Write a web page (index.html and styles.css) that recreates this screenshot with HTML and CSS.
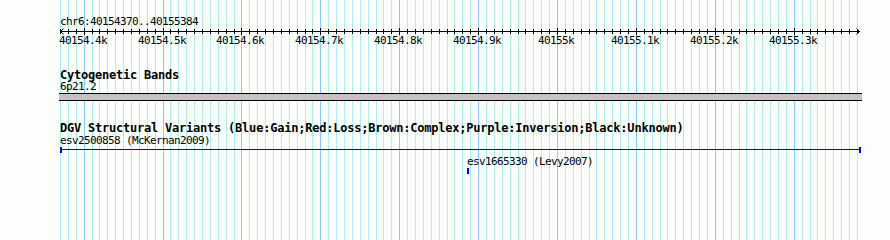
FILE: index.html
```html
<!DOCTYPE html>
<html lang="en">
<head>
    <meta charset="UTF-8">
    <title>chr6:40154370..40155384</title>
    <link rel="stylesheet" href="styles.css">
</head>
<body>
<div class="browser">
    <svg class="grid" id="grid" width="890" height="240"></svg>

    <div class="tracks">
        <div class="ruler">
            <div class="ref-label">chr6:40154370..40155384</div>
            <svg class="ruler-svg" id="ruler" width="890" height="20"></svg>
        </div>

        <div class="track cyto">
            <div class="track-title">Cytogenetic Bands</div>
            <div class="feature-label">6p21.2</div>
            <div class="band"></div>
        </div>

        <div class="track dgv">
            <div class="track-title">DGV Structural Variants (Blue:Gain;Red:Loss;Brown:Complex;Purple:Inversion;Black:Unknown)</div>
            <div class="feature-label">esv2500858 (McKernan2009)</div>
            <div class="sv" style="width: 801px"></div>
            <div class="feature-label second" style="margin-left: 407px">esv1665330 (Levy2007)</div>
            <div class="sv point" style="margin-left: 407px"></div>
        </div>
    </div>
</div>
<script src="script.js"></script>
</body>
</html>
```

FILE: styles.css
```css
body {
    margin: 0;
    background: #fbfefb;
}

.browser {
    position: relative;
    width: 890px;
    height: 240px;
    overflow: hidden;
    font-family: "DejaVu Sans Mono", monospace;
    color: #000;
}

/* grid sits under the tracks */
.grid {
    position: absolute;
    top: 0;
    left: 0;
}
.grid .minor {
    stroke: #b0eeee;
}
.grid .major {
    stroke: #87cefa;
}

.tracks {
    position: relative;
}

.ruler {
    padding-top: 16px;
}

.ref-label,
.feature-label {
    font-size: 11px;
    letter-spacing: -0.62px;
    line-height: 12px;
    white-space: nowrap;
}

.ref-label {
    padding-left: 60px;
}

.ruler-svg {
    display: block;
}
.ruler-svg line,
.ruler-svg polyline {
    stroke: #000;
    fill: none;
}
.tick-label {
    font-family: "DejaVu Sans Mono", monospace;
    font-size: 11px;
    letter-spacing: -0.62px;
    fill: #000;
}

.track {
    padding-left: 60px;
}

.track-title {
    font-size: 12px;
    font-weight: bold;
    letter-spacing: -0.22px;
    line-height: 11px;
    white-space: nowrap;
}

.cyto {
    margin-top: 22px;
}

.band {
    margin-left: -1px;
    width: 803px;
    height: 8px;
    box-sizing: border-box;
    border-top: 1px solid #000;
    border-bottom: 1px solid #000;
    background: #c3c3c3;
}

.dgv {
    margin-top: 22px;
}

.dgv .feature-label {
    margin-top: 1px;
}

.dgv .feature-label.second {
    margin-top: 3px;
}

/* structural variant: line with end brackets */
.sv {
    position: relative;
    height: 6px;
    box-sizing: border-box;
    border-left: 2px solid #0000ff;
    border-right: 2px solid #0000ff;
}
.sv::before {
    content: "";
    position: absolute;
    left: 0;
    right: 0;
    top: 2px;
    height: 1px;
    background: #0000ff;
}

/* variant too short to show a span */
.sv.point {
    width: 2px;
    border-right: none;
}
```

FILE: script.js
```js
const START = 40154370;
const END = 40155384;
const LEFT = 60;
const WIDTH = 800;
const scale = WIDTH / (END - START);
const svgNS = 'http://www.w3.org/2000/svg';

function xOf(bp) {
    return Math.round(LEFT + (bp - START) * scale);
}

function addLine(svg, x1, y1, x2, y2, cls) {
    const l = document.createElementNS(svgNS, 'line');
    l.setAttribute('x1', x1);
    l.setAttribute('y1', y1);
    l.setAttribute('x2', x2);
    l.setAttribute('y2', y2);
    if (cls) l.setAttribute('class', cls);
    svg.appendChild(l);
}

// background grid, every 10bp, darker every 100bp
const grid = document.getElementById('grid');
for (let bp = Math.ceil(START / 10) * 10; bp <= END; bp += 10) {
    const x = xOf(bp) + 0.5;
    addLine(grid, x, 0, x, 240, bp % 100 === 0 ? 'major' : 'minor');
}

// ruler
const ruler = document.getElementById('ruler');
addLine(ruler, LEFT, 3.5, LEFT + WIDTH, 3.5);

const arrows = [
    (LEFT + 3.5) + ',0.5 ' + (LEFT + 0.5) + ',3.5 ' + (LEFT + 3.5) + ',6.5',
    (LEFT + WIDTH - 3.5) + ',0.5 ' + (LEFT + WIDTH - 0.5) + ',3.5 ' + (LEFT + WIDTH - 3.5) + ',6.5'
];
arrows.forEach(function (pts) {
    const p = document.createElementNS(svgNS, 'polyline');
    p.setAttribute('points', pts);
    ruler.appendChild(p);
});

for (let bp = Math.ceil(START / 10) * 10; bp <= END; bp += 10) {
    const x = xOf(bp) + 0.5;
    if (bp % 100 === 0) {
        addLine(ruler, x, 0, x, 7);

        const text = (bp / 1000) + 'k';
        const t = document.createElementNS(svgNS, 'text');
        t.setAttribute('class', 'tick-label');
        t.setAttribute('x', xOf(bp) - text.length * 3 - 1);
        t.setAttribute('y', 16);
        t.textContent = text;
        ruler.appendChild(t);
    } else {
        addLine(ruler, x, 1, x, 6);
    }
}
```
